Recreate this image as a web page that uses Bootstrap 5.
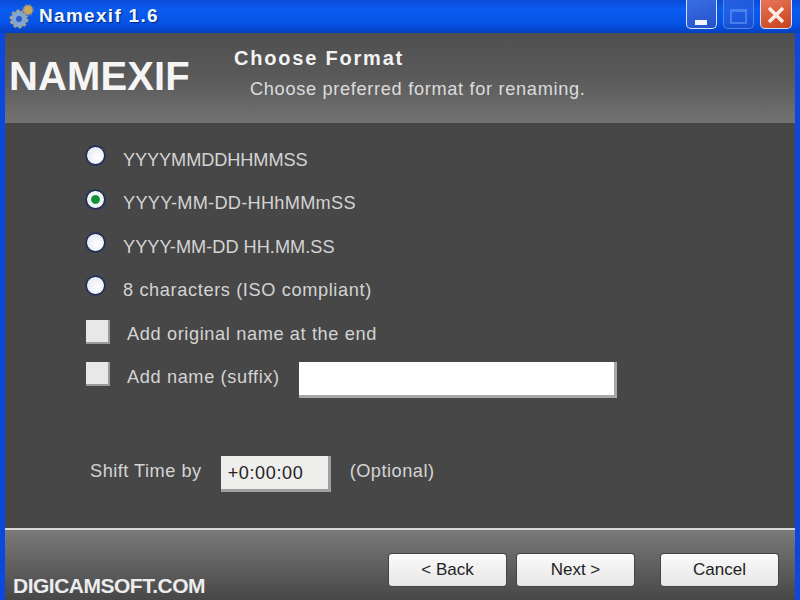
<!DOCTYPE html>
<html lang="en">
<head>
    <meta charset="UTF-8">
    <title>Namexif 1.6</title>
    <link href="https://cdn.jsdelivr.net/npm/bootstrap@5.3.0/dist/css/bootstrap.min.css" rel="stylesheet">
    <style>
        html, body { height: 100%; }
        body {
            background: #474747;
            font-family: "Liberation Sans", Arial, sans-serif;
            overflow: hidden;
        }
        .app-window {
            width: 800px;
            height: 600px;
            background: #0a48e0;
            padding: 0 5px;
        }
        .title-bar {
            height: 33px;
            margin: 0 -5px;
            padding: 0 8px 0 9px;
            background: linear-gradient(180deg, #0a4bd8 0%, #0a5cf0 30%, #0653e6 70%, #0440c0 100%);
        }
        .title-text {
            color: #f2f6ff;
            font-size: 19px;
            font-weight: 700;
            letter-spacing: 1.3px;
            text-shadow: 1px 1px 1px #02257c;
            margin-left: 4px;
        }
        .win-btn {
            width: 31px;
            height: 29px;
            margin-left: 6px;
            padding: 0;
            border: 1px solid #d5e2f8;
            border-top: 0;
            border-radius: 0 0 5px 5px;
            background: linear-gradient(160deg, #3b6ee6, #2350c8);
        }
        .win-btn.is-off { opacity: .55; border-color: #8fb0ee; }
        .win-btn.is-close { width: 32px; background: linear-gradient(160deg, #e8775a, #c8401c); }
        .win-min-bar { width: 12px; height: 5px; background: #eef3ff; margin: 16px 0 0 8px; }
        .win-max-box { width: 17px; height: 15px; border: 2px solid #7f9fe8; border-top-width: 3px; margin: 4px 0 0 6px; }
        .head-band {
            height: 92px;
            background: linear-gradient(180deg, #4f4f4f 0%, #5a5a5a 50%, #727272 100%);
            border-bottom: 2px solid #444;
        }
        .brand-word {
            width: 229px;
            padding: 21px 0 0 4px;
            color: #f5f5f5;
            font-size: 40px;
            line-height: 44px;
            font-weight: 700;
            letter-spacing: .1px;
        }
        .head-title {
            margin-top: 13px;
            color: #f3f3f3;
            font-size: 20px;
            line-height: 24px;
            font-weight: 700;
            letter-spacing: 1.8px;
        }
        .head-sub {
            margin: 7px 0 0 16px;
            color: #dcdcdc;
            font-size: 18.2px;
            line-height: 24px;
            letter-spacing: .68px;
        }
        .form-area {
            height: 403px;
            padding: 14px 0 0 81px;
            background: #474747;
            color: #d4d4d4;
            font-size: 18.2px;
            letter-spacing: .62px;
        }
        .opt-row { height: 43.4px; }
        .opt-row .radio-dot {
            flex: none;
            width: 19px;
            height: 19px;
            margin: 0 0 10px 0;
            border: 1px solid #16265c;
            background: radial-gradient(circle at 60% 60%, #fff 0, #e6edf2 70%);
            box-shadow: 0 0 0 1px #2c3658;
            opacity: 1;
        }
        .opt-row .radio-dot:checked {
            background: radial-gradient(circle, #12913a 0, #12913a 32%, #f2f7f3 42%, #e6edf2 100%);
        }
        .opt-label { margin: 0 0 0 18px; }
        .caps-tight { letter-spacing: -.1px; }
        .caps-mid { letter-spacing: .27px; }
        .caps-low { letter-spacing: 0; }
        .opt-row .square-check {
            flex: none;
            width: 24px;
            height: 24px;
            margin: 0 17px 5px 0;
            border: 0;
            border-right: 2px solid #9a9a9a;
            border-bottom: 2px solid #9a9a9a;
            border-radius: 0;
            background: #e8e8e6;
            box-shadow: none;
            opacity: 1;
        }
        .suffix-row .square-check { margin-top: 6px; margin-bottom: 0; }
        .suffix-row label { margin-top: 8px; }
        .suffix-input {
            flex: none;
            width: 318px;
            height: 36px;
            margin: 6px 0 0 19px;
            border: 0;
            border-right: 3px solid #a8a8a8;
            border-bottom: 3px solid #a8a8a8;
            border-radius: 0;
            background: #fff;
        }
        .shift-row {
            margin: 57px 0 0 4px;
            height: 36px;
            letter-spacing: .5px;
        }
        .shift-note { margin-bottom: 6px; }
        .time-input {
            flex: none;
            width: 110px;
            height: 36px;
            margin: 0 19px;
            padding: 1px 0 0 7px;
            border: 0;
            border-right: 3px solid #a0a0a0;
            border-bottom: 3px solid #a0a0a0;
            border-radius: 0;
            background: #eeeeec;
            color: #222;
            font-size: 18px;
            letter-spacing: .65px;
        }
        .foot-band {
            height: 72px;
            border-top: 2px solid #d6d6d6;
            background: linear-gradient(180deg, #7a7a7a 0%, #5e5e5e 55%, #474747 100%);
        }
        .foot-brand {
            margin: 0 0 0 8px;
            padding-bottom: 1px;
            color: #ececec;
            font-size: 21px;
            line-height: 26px;
            font-weight: 700;
            letter-spacing: -.5px;
        }
        .foot-btn {
            width: 117px;
            height: 32px;
            padding: 0;
            margin-bottom: 14px;
            border: 0;
            border-radius: 3px;
            background: linear-gradient(180deg, #fafafa, #e6e6e6);
            box-shadow: 0 0 0 1px #444;
            color: #222;
            font-size: 17px;
        }
        .foot-btn.gap-wide { margin-left: 27px; margin-right: 17px; }
        .foot-btn.gap-thin { margin-left: 11px; }
    </style>
</head>
<body>
    <div class="app-window">
        <div class="title-bar d-flex align-items-center">
            <svg width="26" height="26" viewBox="0 0 26 26">
                <circle cx="10" cy="15" r="8" fill="#7fa6d8" stroke="#a7a28a" stroke-width="3" stroke-dasharray="3 2"/>
                <circle cx="10" cy="15" r="3" fill="#2a5cc8"/>
                <circle cx="19" cy="6" r="5" fill="#c8a85c" stroke="#5f7fa8" stroke-width="2" stroke-dasharray="2 2"/>
            </svg>
            <span class="title-text">Namexif 1.6</span>
            <div class="d-flex ms-auto align-self-start">
                <button class="win-btn d-block" type="button" aria-label="Minimize"><div class="win-min-bar"></div></button>
                <button class="win-btn is-off d-block" type="button" aria-label="Maximize"><div class="win-max-box"></div></button>
                <button class="win-btn is-close d-block" type="button" aria-label="Close">
                    <svg width="22" height="22" viewBox="0 0 22 22"><path d="M4 4 18 18M18 4 4 18" stroke="#fbeee8" stroke-width="3.4" fill="none"/></svg>
                </button>
            </div>
        </div>

        <div class="head-band d-flex">
            <div class="brand-word">NAMEXIF</div>
            <div>
                <div class="head-title">Choose Format</div>
                <div class="head-sub">Choose preferred format for renaming.</div>
            </div>
        </div>

        <div class="form-area">
            <div class="opt-row d-flex align-items-center">
                <input class="radio-dot form-check-input" type="radio" name="fmt" id="fmt1">
                <label class="opt-label caps-tight" for="fmt1">YYYYMMDDHHMMSS</label>
            </div>
            <div class="opt-row d-flex align-items-center">
                <input class="radio-dot form-check-input" type="radio" name="fmt" id="fmt2" checked>
                <label class="opt-label caps-mid" for="fmt2">YYYY-MM-DD-HHhMMmSS</label>
            </div>
            <div class="opt-row d-flex align-items-center">
                <input class="radio-dot form-check-input" type="radio" name="fmt" id="fmt3">
                <label class="opt-label caps-low" for="fmt3">YYYY-MM-DD HH.MM.SS</label>
            </div>
            <div class="opt-row d-flex align-items-center">
                <input class="radio-dot form-check-input" type="radio" name="fmt" id="fmt4">
                <label class="opt-label" for="fmt4">8 characters (ISO compliant)</label>
            </div>
            <div class="opt-row d-flex align-items-center">
                <input class="square-check form-check-input" type="checkbox" id="addEnd">
                <label for="addEnd">Add original name at the end</label>
            </div>
            <div class="opt-row suffix-row d-flex align-items-start">
                <input class="square-check form-check-input" type="checkbox" id="addSuffix">
                <label for="addSuffix">Add name (suffix)</label>
                <input class="suffix-input form-control" type="text" aria-label="Suffix">
            </div>
            <div class="shift-row d-flex align-items-center">
                <span class="shift-note">Shift Time by</span>
                <input class="time-input form-control" type="text" value="+0:00:00" aria-label="Shift time">
                <span class="shift-note">(Optional)</span>
            </div>
        </div>

        <div class="foot-band d-flex align-items-end">
            <div class="foot-brand me-auto">DIGICAMSOFT.COM</div>
            <button class="foot-btn btn" type="button">&lt; Back</button>
            <button class="foot-btn gap-thin btn" type="button">Next &gt;</button>
            <button class="foot-btn gap-wide btn" type="button">Cancel</button>
        </div>
    </div>
    <script src="https://cdn.jsdelivr.net/npm/bootstrap@5.3.0/dist/js/bootstrap.bundle.min.js"></script>
</body>
</html>
